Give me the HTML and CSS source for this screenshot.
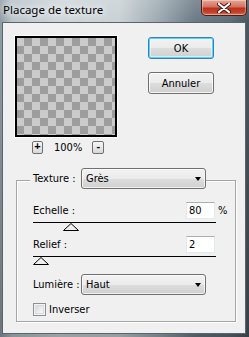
FILE: index.html
```html
<!DOCTYPE html>
<html>
<head>
<meta charset="utf-8">
<link rel="stylesheet" href="styles.css">
</head>
<body>
<div class="window">
  <div class="titlebar">
    <span class="title">Placage de texture</span>
    <div class="close">
      <svg width="14" height="10" viewBox="0 0 14 10"><path d="M2 1 L12 9 M12 1 L2 9" stroke="#3a1a1a" stroke-width="4" stroke-linecap="round"/><path d="M2 1 L12 9 M12 1 L2 9" stroke="#ffffff" stroke-width="2.2" stroke-linecap="round"/></svg>
    </div>
  </div>
  <div class="client">
    <div class="top">
      <div class="preview-col">
        <div class="preview"></div>
        <div class="zoom-row">
          <div class="zbtn">+</div>
          <span class="zval">100%</span>
          <div class="zbtn minus">-</div>
        </div>
      </div>
      <div class="btn-col">
        <div class="btn default">OK</div>
        <div class="btn">Annuler</div>
      </div>
    </div>
    <div class="group">
      <div class="group-head">
        <span class="label">Texture :</span>
        <div class="combo"><span>Grès</span><i class="arrow"></i></div>
      </div>
      <div class="field-row first">
        <span class="label wide">Echelle :</span>
        <div class="input">80</div>
        <span class="unit">%</span>
      </div>
      <div class="slider">
        <div class="thumb" style="margin-left:30px"><svg width="16" height="8" viewBox="0 0 16 8"><polygon points="0.5,7.5 8,0.5 15.5,7.5" fill="none" stroke="#000" stroke-width="1"/></svg></div>
      </div>
      <div class="field-row second">
        <span class="label wide">Relief :</span>
        <div class="input">2</div>
      </div>
      <div class="slider">
        <div class="thumb" style="margin-left:0px"><svg width="16" height="8" viewBox="0 0 16 8"><polygon points="0.5,7.5 8,0.5 15.5,7.5" fill="none" stroke="#000" stroke-width="1"/></svg></div>
      </div>
      <div class="combo-row">
        <span class="label">Lumière :</span>
        <div class="combo"><span>Haut</span><i class="arrow"></i></div>
      </div>
      <div class="check-row">
        <div class="checkbox"></div>
        <span class="check-label">Inverser</span>
      </div>
    </div>
  </div>
</div>
</body>
</html>
```
FILE: styles.css
```css
html, body {
  margin: 0;
  padding: 0;
}
body {
  width: 249px;
  height: 337px;
  overflow: hidden;
  font-family: "DejaVu Sans Condensed", "Liberation Sans", Arial, sans-serif;
  font-size: 11px;
  color: #000;
}
.window {
  width: 249px;
  height: 337px;
  background:
    linear-gradient(180deg, rgba(255,255,255,0.15) 0px, rgba(255,255,255,0) 22px, rgba(0,0,0,0.25) 100%),
    linear-gradient(90deg, #8d9aa3 0px, #b9c3c9 12px, #cfd6da 60px, #c9d1d5 120px, #9ba8b0 160px, #6b7a85 195px, #5d6c77 230px, #4a555d 249px);
}
.titlebar {
  height: 22px;
  display: flex;
  align-items: flex-start;
}
.title {
  font-family: "Noto Sans", "Liberation Sans", sans-serif;
  font-size: 11.5px;
  line-height: 14px;
  margin-top: 3px;
  margin-left: 3px;
  color: #000;
  text-shadow: 0 0 6px #fff, 0 0 10px #fff;
}
.close {
  margin-left: auto;
  margin-right: 2px;
  width: 46px;
  height: 16px;
  box-sizing: border-box;
  border: 1px solid #4a1d18;
  border-top: none;
  border-radius: 0 0 5px 5px;
  background: linear-gradient(180deg, #e6a596 0%, #d4735f 45%, #b8321c 55%, #c8462c 85%, #e07a55 100%);
  box-shadow: inset 0 0 0 1px rgba(255,255,255,0.35);
  display: flex;
  align-items: center;
  justify-content: center;
}
.client {
  margin-left: 2px;
  width: 242px;
  height: 310px;
  border: 1px solid #59646c;
  background: #f0f0f0;
}
.top {
  display: flex;
  padding: 13px 0 0 12px;
}
.preview-col {
  width: 102px;
}
.preview {
  width: 102px;
  height: 101px;
  box-sizing: border-box;
  border: 2px solid #000;
  box-shadow: 0 0 0 1px #fff;
  background-color: #cbcbcb;
  background-image: repeating-conic-gradient(#9d9d9d 0 25%, #cbcbcb 0 50%);
  background-size: 16px 16px;
  background-position: -1px 0;
}
.zoom-row {
  display: flex;
  align-items: center;
  margin-top: 4px;
  padding-left: 17px;
  height: 13px;
}
.zbtn {
  width: 11px;
  height: 13px;
  box-sizing: border-box;
  border: 1px solid #707070;
  border-radius: 2px;
  background: linear-gradient(180deg, #f6f6f6 0%, #e8e8e8 50%, #d6d6d6 100%);
  font-family: "Liberation Sans", Arial, sans-serif;
  font-size: 11px;
  font-weight: bold;
  line-height: 13px;
  text-align: center;
  display: flex;
  align-items: flex-end;
  justify-content: center;
}
.zbtn.minus {
  width: 12px;
  margin-left: 10px;
}
.zval {
  margin-left: 11px;
  font-size: 11px;
  line-height: 13px;
}
.btn-col {
  margin-left: 31px;
  padding-top: 1px;
  display: flex;
  flex-direction: column;
  gap: 13px;
}
.btn {
  width: 66px;
  height: 22px;
  box-sizing: border-box;
  border: 1px solid #707070;
  border-radius: 3px;
  background: linear-gradient(180deg, #f2f2f2 0%, #ebebeb 50%, #dddddd 51%, #cfcfcf 100%);
  box-shadow: inset 0 0 0 1px rgba(255,255,255,0.8);
  display: flex;
  align-items: center;
  justify-content: center;
  font-size: 11px;
}
.btn.default {
  border-color: #3c7fb1;
  box-shadow: inset 0 0 0 1px #48d8fb, inset 0 0 0 2px rgba(255,255,255,0.5);
}
.group {
  margin-top: 26px;
  margin-left: 13px;
  width: 220px;
  height: 142px;
  box-sizing: border-box;
  border: 1px solid #a5a5a5;
  box-shadow: 1px 1px 0 #fff, inset 1px 1px 0 #fff;
  padding-left: 16px;
}
.group-head {
  margin-top: -13px;
  margin-left: -3px;
  padding-left: 3px;
  display: flex;
  align-items: center;
  width: fit-content;
  background: #f0f0f0;
}
.label {
  width: 48px;
  line-height: 13px;
  white-space: nowrap;
}
.label.wide {
  width: 153px;
}
.combo {
  width: 125px;
  height: 21px;
  box-sizing: border-box;
  border: 1px solid #707070;
  border-radius: 3px;
  background: linear-gradient(180deg, #f2f2f2 0%, #ebebeb 50%, #dddddd 51%, #cfcfcf 100%);
  box-shadow: inset 0 0 0 1px rgba(255,255,255,0.7);
  display: flex;
  align-items: center;
  padding-left: 4px;
  font-size: 11px;
}
.combo span {
  flex: 1;
}
.arrow {
  width: 0;
  height: 0;
  border-left: 3.5px solid transparent;
  border-right: 3.5px solid transparent;
  border-top: 4px solid #000;
  margin-right: 4px;
}
.field-row {
  display: flex;
  align-items: center;
  height: 17px;
}
.field-row.first {
  margin-top: 13px;
}
.field-row.second {
  margin-top: 5px;
}
.input {
  width: 29px;
  height: 17px;
  box-sizing: border-box;
  border: 1px solid #e3e9ef;
  border-top-color: #abadb3;
  background: #fff;
  padding-left: 2px;
  line-height: 15px;
  font-size: 11px;
}
.unit {
  margin-left: 3px;
  font-size: 11px;
}
.slider {
  width: 183px;
  margin-top: 3px;
  border-top: 1px solid #000;
}
.thumb {
  width: 16px;
  height: 8px;
}
.thumb svg {
  display: block;
}
.combo-row {
  display: flex;
  align-items: center;
  margin-top: 9px;
}
.check-row {
  display: flex;
  align-items: center;
  margin-top: 8px;
}
.checkbox {
  width: 13px;
  height: 13px;
  box-sizing: border-box;
  border: 1px solid #8e8f8f;
  background: linear-gradient(135deg, #cbcfd5 0%, #eef0f2 60%, #f7f7f7 100%);
  box-shadow: inset 0 0 0 1px #f4f4f4, inset 0 0 0 2px #d8dbe0;
}
.check-label {
  margin-left: 3px;
  line-height: 13px;
}
```
